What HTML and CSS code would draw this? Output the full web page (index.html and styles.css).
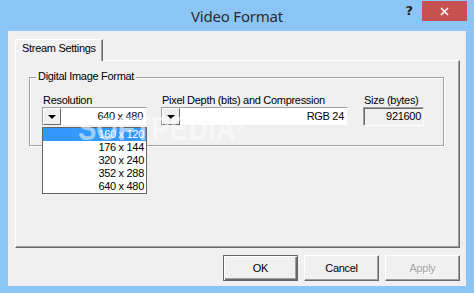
FILE: index.html
```html
<!DOCTYPE html>
<html lang="en">
<head>
    <meta charset="UTF-8">
    <title>Video Format</title>
    <link rel="stylesheet" href="styles.css">
</head>
<body>
    <div class="window">
        <div class="titlebar">
            <span></span>
            <span class="title">Video Format</span>
            <div class="controls">
                <span class="help">?</span>
                <span class="close">
                    <svg width="9" height="9" viewBox="0 0 9 9"><path d="M1 1 L8 8 M8 1 L1 8" stroke="#fff" stroke-width="1.6"/></svg>
                </span>
            </div>
        </div>

        <div class="client">
            <div class="tabs">
                <div class="tab active">Stream Settings</div>
            </div>

            <div class="tab-panel">
                <div class="group">
                    <span class="group-title">Digital Image Format</span>
                    <div class="fields">
                        <div class="field field-res">
                            <div class="label">Resolution</div>
                            <div class="combo">
                                <span class="combo-btn"><span class="arrow"></span></span>
                                <span class="combo-value">640 x 480</span>
                            </div>
                            <!-- open dropdown -->
                            <ul class="dropdown">
                                <li class="selected">160 x 120</li>
                                <li>176 x 144</li>
                                <li>320 x 240</li>
                                <li>352 x 288</li>
                                <li>640 x 480</li>
                            </ul>
                        </div>
                        <div class="field field-depth">
                            <div class="label">Pixel Depth (bits) and Compression</div>
                            <div class="combo">
                                <span class="combo-btn"><span class="arrow"></span></span>
                                <span class="combo-value">RGB 24</span>
                            </div>
                        </div>
                        <div class="field field-size">
                            <div class="label">Size (bytes)</div>
                            <div class="readonly">921600</div>
                        </div>
                    </div>
                </div>
            </div>

            <div class="buttons">
                <button class="btn default">OK</button>
                <button class="btn">Cancel</button>
                <button class="btn" disabled>Apply</button>
            </div>
        </div>

        <div class="watermark">SOFTPEDIA<span class="reg">®</span></div>
    </div>
</body>
</html>
```

FILE: styles.css
```css
html, body {
    margin: 0;
    padding: 0;
}

body {
    width: 474px;
    height: 293px;
    overflow: hidden;
    background-color: #8bc5f5; /* window frame */
    font-family: "Liberation Sans", Arial, sans-serif;
    font-size: 11px;
    letter-spacing: -0.3px;
    color: #000;
}

.window {
    position: relative;
    height: 293px;
    display: flex;
    flex-direction: column;
}

/* Title bar */
.titlebar {
    height: 31px;
    display: grid;
    grid-template-columns: 1fr auto 1fr;
    align-items: center;
}

.title {
    font-family: "Noto Sans", "Open Sans", sans-serif;
    font-size: 15px;
    letter-spacing: -0.2px;
    color: #2b2b2b;
}

.controls {
    align-self: start;
    justify-self: end;
    display: flex;
    margin-top: 1px;
    padding-right: 7px;
}

.help {
    width: 26px;
    height: 20px;
    line-height: 20px;
    text-align: center;
    font-family: "DejaVu Sans", sans-serif;
    font-weight: bold;
    font-size: 13px;
    color: #222;
}

.close {
    width: 45px;
    height: 20px;
    background-color: #c75050;
    display: flex;
    align-items: center;
    justify-content: center;
}

/* Client area */
.client {
    margin: 0 8px 0 8px;
    height: 255px;
    background-color: #f0f0f0;
    padding: 8px 6px 5px 7px;
    box-sizing: border-box;
    display: flex;
    flex-direction: column;
}

.tabs {
    display: flex;
    position: relative;
    z-index: 1;
}

.tab {
    width: 88px;
    height: 22px;
    box-sizing: border-box;
    padding: 2px 0 0 6px;
    line-height: 13px;
    background-color: #f0f0f0;
    border: 1px solid;
    border-color: #fff #696969 transparent #fff;
    border-bottom: none;
    box-shadow: inset -1px 0 0 #a0a0a0;
    margin-bottom: -1px;
}

.tab-panel {
    height: 188px;
    box-sizing: border-box;
    border: 1px solid;
    border-color: #fff #696969 #696969 #fff;
    box-shadow: inset -1px -1px 0 #a0a0a0;
    padding: 16px 15px 0 13px;
}

/* Group box */
.group {
    position: relative;
    height: 69px;
    box-sizing: border-box;
    border: 1px solid #a0a0a0;
    box-shadow: inset 1px 1px 0 #fff, 1px 1px 0 #fff;
    padding: 16px 0 0 12px;
}

.group-title {
    position: absolute;
    top: -8px;
    left: 6px;
    padding: 0 2px;
    line-height: 13px;
    background-color: #f0f0f0;
}

.fields {
    display: flex;
}

.field {
    position: relative;
}

.field-res {
    width: 105px;
    margin-right: 14px;
}

.field-depth {
    width: 187px;
    margin-right: 15px;
}

.field-size {
    width: 61px;
}

.label {
    line-height: 13px;
    padding-left: 1px;
    white-space: nowrap;
}

.combo {
    height: 19px;
    box-sizing: border-box;
    display: flex;
    background-color: #fff;
    border: 1px solid;
    border-color: #a0a0a0 #f0f0f0 #f0f0f0 #a0a0a0;
}

.combo-btn {
    width: 18px;
    height: 17px;
    box-sizing: border-box;
    background-color: #f0f0f0;
    border: 1px solid;
    border-color: #fff #696969 #696969 #fff;
    display: flex;
    align-items: center;
    justify-content: center;
}

.arrow {
    width: 0;
    height: 0;
    border-left: 4px solid transparent;
    border-right: 4px solid transparent;
    border-top: 4px solid #000;
    margin-top: 1px;
}

.combo-value {
    flex: 1;
    text-align: right;
    line-height: 17px;
    padding-right: 3px;
}

.dropdown {
    position: absolute;
    top: 33px;
    left: 0;
    width: 105px;
    box-sizing: border-box;
    margin: 0;
    padding: 0;
    list-style: none;
    background-color: #fff;
    border: 1px solid #646464;
    z-index: 2;
}

.dropdown li {
    height: 13px;
    line-height: 13px;
    text-align: right;
    padding-right: 2px;
}

.dropdown li.selected {
    background-color: #3399ff;
    color: #fff;
}

.readonly {
    height: 19px;
    box-sizing: border-box;
    border: 1px solid;
    border-color: #a0a0a0 #fff #fff #a0a0a0;
    box-shadow: inset 1px 1px 0 #696969;
    text-align: right;
    line-height: 17px;
    padding-right: 2px;
}

/* Bottom buttons */
.buttons {
    display: flex;
    justify-content: flex-end;
    gap: 6px;
    margin-top: 7px;
}

.btn {
    width: 75px;
    height: 26px;
    font-family: "Liberation Sans", Arial, sans-serif;
    font-size: 11px;
    letter-spacing: -0.3px;
    color: #000;
    background-color: #f0f0f0;
    border: 1px solid;
    border-color: #fff #696969 #696969 #fff;
    box-shadow: inset -1px -1px 0 #a0a0a0;
    padding: 0;
}

.btn.default {
    border-color: #646464;
    box-shadow: inset 1px 1px 0 #fff, inset -1px -1px 0 #696969, inset -2px -2px 0 #a0a0a0;
}

.btn:disabled {
    color: #a0a0a0;
    text-shadow: 1px 1px 0 #fff;
}

/* Faint site watermark over the dialog */
.watermark {
    position: absolute;
    left: 78px;
    top: 111px;
    font-family: "Liberation Sans", Arial, sans-serif;
    font-weight: bold;
    font-size: 34px;
    line-height: 34px;
    letter-spacing: 0;
    color: rgba(255, 255, 255, 0.55);
    transform: scaleX(0.81);
    transform-origin: left top;
    pointer-events: none;
    z-index: 5;
}

.watermark .reg {
    font-size: 10px;
    vertical-align: top;
    margin-left: 3px;
}
```
